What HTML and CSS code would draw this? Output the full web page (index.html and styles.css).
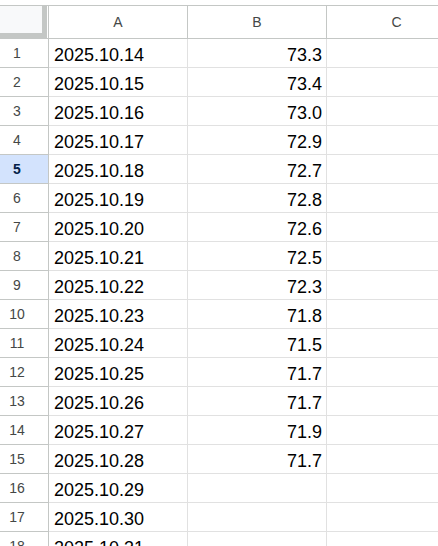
FILE: index.html
```html
<!DOCTYPE html>
<html>
<head>
<meta charset="utf-8">
<link rel="stylesheet" href="styles.css">
</head>
<body>
<div class="sheet">
  <div class="corner"><div class="corner-box"></div></div>
  <div class="col-head">A</div>
  <div class="col-head">B</div>
  <div class="col-head last">C</div>

  <div class="row-head">1</div><div class="cell">2025.10.14</div><div class="cell num">73.3</div><div class="cell last"></div>
  <div class="row-head">2</div><div class="cell">2025.10.15</div><div class="cell num">73.4</div><div class="cell last"></div>
  <div class="row-head">3</div><div class="cell">2025.10.16</div><div class="cell num">73.0</div><div class="cell last"></div>
  <div class="row-head">4</div><div class="cell">2025.10.17</div><div class="cell num">72.9</div><div class="cell last"></div>
  <div class="row-head active">5</div><div class="cell">2025.10.18</div><div class="cell num">72.7</div><div class="cell last"></div>
  <div class="row-head">6</div><div class="cell">2025.10.19</div><div class="cell num">72.8</div><div class="cell last"></div>
  <div class="row-head">7</div><div class="cell">2025.10.20</div><div class="cell num">72.6</div><div class="cell last"></div>
  <div class="row-head">8</div><div class="cell">2025.10.21</div><div class="cell num">72.5</div><div class="cell last"></div>
  <div class="row-head">9</div><div class="cell">2025.10.22</div><div class="cell num">72.3</div><div class="cell last"></div>
  <div class="row-head">10</div><div class="cell">2025.10.23</div><div class="cell num">71.8</div><div class="cell last"></div>
  <div class="row-head">11</div><div class="cell">2025.10.24</div><div class="cell num">71.5</div><div class="cell last"></div>
  <div class="row-head">12</div><div class="cell">2025.10.25</div><div class="cell num">71.7</div><div class="cell last"></div>
  <div class="row-head">13</div><div class="cell">2025.10.26</div><div class="cell num">71.7</div><div class="cell last"></div>
  <div class="row-head">14</div><div class="cell">2025.10.27</div><div class="cell num">71.9</div><div class="cell last"></div>
  <div class="row-head">15</div><div class="cell">2025.10.28</div><div class="cell num">71.7</div><div class="cell last"></div>
  <div class="row-head">16</div><div class="cell">2025.10.29</div><div class="cell num"></div><div class="cell last"></div>
  <div class="row-head">17</div><div class="cell">2025.10.30</div><div class="cell num"></div><div class="cell last"></div>
  <div class="row-head">18</div><div class="cell">2025.10.31</div><div class="cell num"></div><div class="cell last"></div>
</div>
</body>
</html>
```

FILE: styles.css
```css
html, body {
  margin: 0;
  padding: 0;
  background: #ffffff;
  overflow: hidden;
}

body {
  padding-top: 5px;
  font-family: "Liberation Sans", Arial, sans-serif;
}

.sheet {
  display: grid;
  grid-template-columns: 49px 139px 139px 1fr;
  grid-auto-rows: 29px;
  grid-template-rows: 34px;
  width: 100%;
}

.sheet > div {
  box-sizing: border-box;
}

.corner {
  border-top: 1px solid #c4c7c5;
  border-bottom: 1px solid #c4c7c5;
  border-right: 1px solid #c4c7c5;
  padding-right: 1px;
  background: #ffffff;
  display: flex;
}

.corner-box {
  flex: 1;
  background: #f8f9fa;
  border-right: 5px solid #c4c7c5;
  border-bottom: 5px solid #c4c7c5;
}

.col-head {
  border-top: 1px solid #c4c7c5;
  border-bottom: 1px solid #c4c7c5;
  border-right: 1px solid #c4c7c5;
  display: flex;
  align-items: center;
  justify-content: center;
  font-size: 14px;
  color: #444746;
}

.col-head.last {
  border-right: none;
  padding-left: 28px;
}

.row-head {
  border-right: 1px solid #c4c7c5;
  border-bottom: 1px solid #c4c7c5;
  display: flex;
  align-items: center;
  justify-content: center;
  padding-right: 14px;
  font-size: 14px;
  color: #444746;
}

.row-head.active {
  background: #d3e3fd;
  color: #041e49;
  font-weight: bold;
}

.cell {
  border-right: 1px solid #e1e1e1;
  border-bottom: 1px solid #e1e1e1;
  display: flex;
  align-items: flex-end;
  padding: 0 4px 3px 5px;
  font-size: 18px;
  line-height: 18px;
  color: #000000;
  white-space: nowrap;
}

.cell.last {
  border-right: none;
}

.cell.num {
  justify-content: flex-end;
}
```
